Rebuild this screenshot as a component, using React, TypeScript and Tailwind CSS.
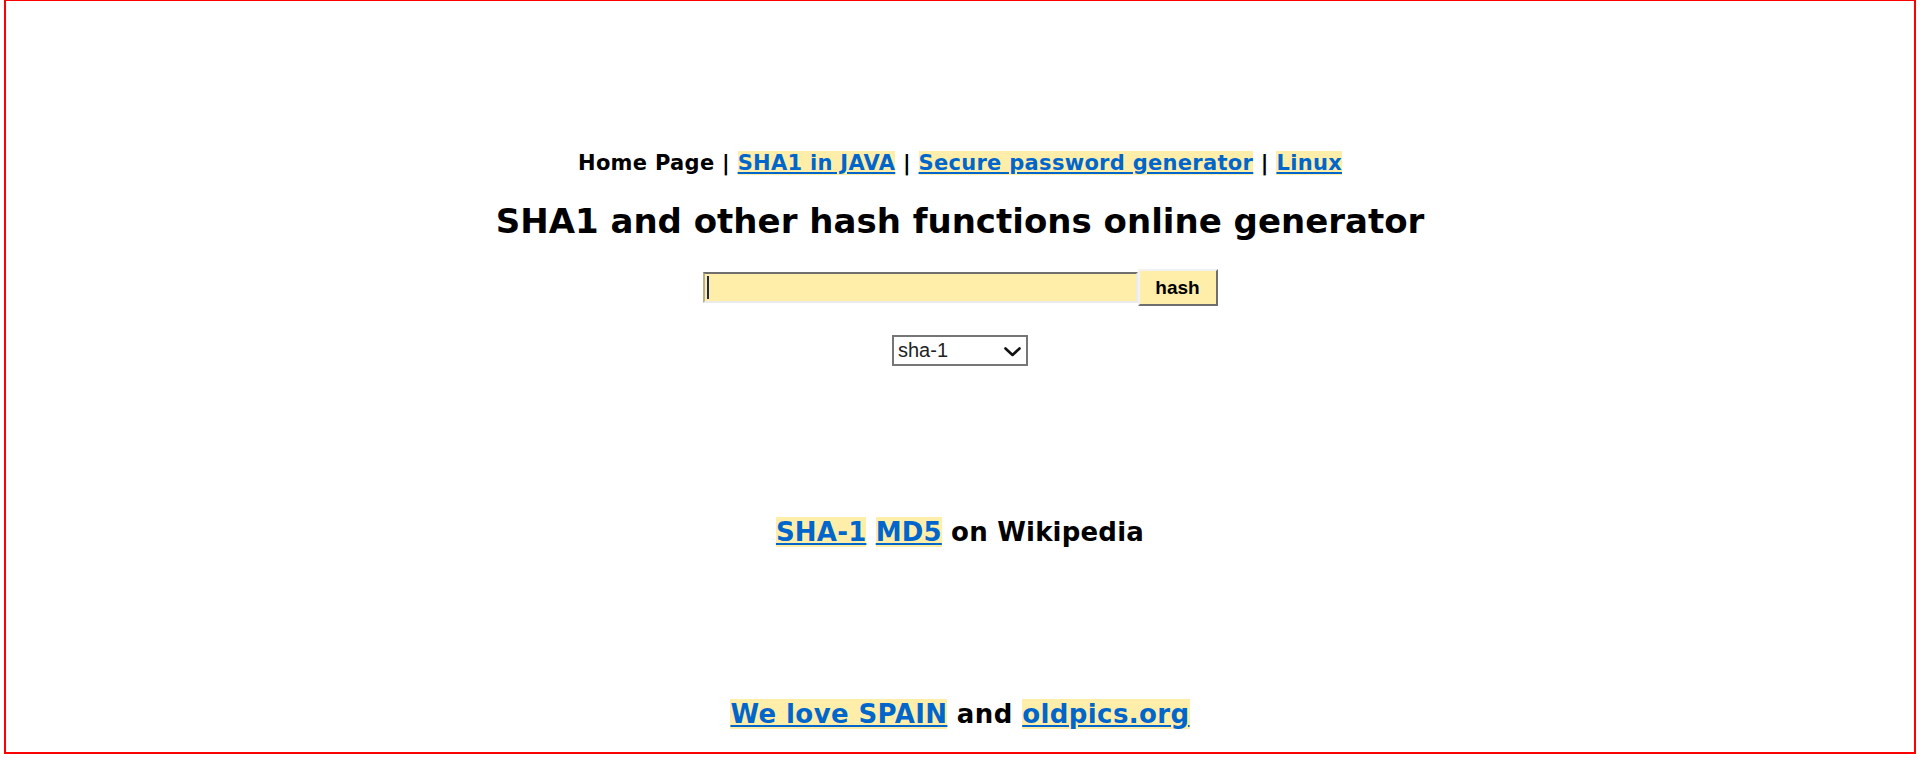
import React from 'react'

const linkCls = 'bg-[#ffeeaa] text-[#0066cc] underline decoration-2 underline-offset-2'

export default function App() {
    const [text, setText] = React.useState('')
    const [algo, setAlgo] = React.useState('sha-1')

    return (
        <div className="px-1 bg-white">
            <div className="-mt-px h-[755px] border-2 border-[#ff0000] text-center font-['DejaVu_Sans',sans-serif] font-bold text-black">
                <nav className="mt-[151px] text-[21px] leading-[23px] tracking-[0.3px]">
                    Home Page | <a href="#" className={linkCls}>SHA1 in JAVA</a> |{' '}
                    <a href="#" className={linkCls}>Secure password generator</a> |{' '}
                    <a href="#" className={linkCls}>Linux</a>
                </nav>

                <h1 className="mt-[26px] text-[34px] leading-[40px]">SHA1 and other hash functions online generator</h1>

                <form className="mt-[28px] flex flex-row items-center justify-center" onSubmit={(e) => e.preventDefault()}>
                    <div className="relative">
                        <input
                            value={text}
                            onChange={(e) => setText(e.target.value)}
                            className="block w-[435px] h-[31px] px-1 bg-[#ffeeaa] border-2 border-t-[#6f6f6f] border-l-[#b8b08a] border-b-[#ebebeb] border-r-[#ebebeb] outline-none caret-[#1f2a55] font-['Liberation_Sans',sans-serif] font-normal text-[16px]"
                        />
                        {text === '' && (
                            <span className="absolute left-[4px] top-[4px] w-[2px] h-[23px] bg-[#1f2a55] pointer-events-none" />
                        )}
                    </div>
                    <button
                        type="submit"
                        className="w-[80px] h-[37px] bg-[#ffeeaa] border-2 border-t-[#f2f2f2] border-l-[#f2f2f2] border-b-[#6e6e6e] border-r-[#6e6e6e] font-['Liberation_Sans',sans-serif] font-bold text-[19px] leading-none"
                    >
                        hash
                    </button>
                </form>

                <div className="mt-[29px] flex justify-center">
                    <div className="relative">
                        <select
                            value={algo}
                            onChange={(e) => setAlgo(e.target.value)}
                            className="block appearance-none w-[136px] h-[31px] pl-[4px] border-2 border-[#767676] bg-white font-['Liberation_Sans',sans-serif] font-normal text-[20px] leading-[27px] text-[#222]"
                        >
                            <option value="sha-1">sha-1</option>
                            <option value="md5">md5</option>
                            <option value="sha-256">sha-256</option>
                            <option value="sha-512">sha-512</option>
                        </select>
                        <svg
                            className="absolute right-[7px] top-[12px] pointer-events-none"
                            width="17"
                            height="10"
                            viewBox="0 0 17 10"
                            fill="none"
                        >
                            <path d="M1.5 1.5 L8.5 8 L15.5 1.5" stroke="#111" strokeWidth="2.6" strokeLinecap="round" strokeLinejoin="round" />
                        </svg>
                    </div>
                </div>

                <p className="mt-[151px] text-[26px] leading-[30px] tracking-[0.2px]">
                    <a href="#" className={linkCls}>SHA-1</a> <a href="#" className={linkCls}>MD5</a> on Wikipedia
                </p>

                <p className="mt-[152px] text-[26px] leading-[30px] tracking-[0.4px]">
                    <a href="#" className={linkCls}>We love SPAIN</a> and <a href="#" className={linkCls}>oldpics.org</a>
                </p>
            </div>
        </div>
    )
}
